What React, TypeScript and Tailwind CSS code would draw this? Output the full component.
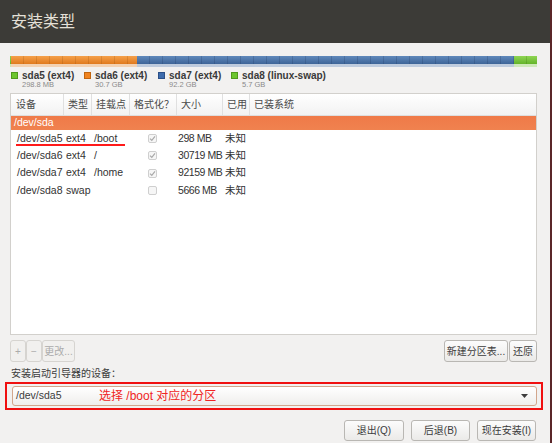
import React from 'react'

const font = { fontFamily: '"Liberation Sans", "Noto Sans CJK SC", sans-serif' }

const segments = [
  { w: 'w-[1px]', cls: 'bg-[image:linear-gradient(to_bottom,#8fd553,#64b42a)]', ref: 'bg-[#b7e497]' },
  { w: 'w-[126px]', cls: 'bg-[image:repeating-linear-gradient(90deg,transparent_0_12px,rgba(120,60,0,0.18)_12px_13px),linear-gradient(to_bottom,#f5a04a,#e07a1e)]', ref: 'bg-[#f4c69a]' },
  { w: 'w-[377px]', cls: 'bg-[image:repeating-linear-gradient(90deg,transparent_0_12px,rgba(20,40,80,0.2)_12px_13px),linear-gradient(to_bottom,#6089bb,#3e6598)]', ref: 'bg-[#a9bcd6]' },
  { w: 'flex-1', cls: 'bg-[image:repeating-linear-gradient(90deg,transparent_0_12px,rgba(40,90,0,0.2)_12px_13px),linear-gradient(to_bottom,#8fd553,#64b42a)]', ref: 'bg-[#bfe6a2]' },
]

const legend = [
  { name: 'sda5 (ext4)', size: '298.8 MB', color: 'bg-[#6cc62e] border-[#4f9a1c]', w: 'w-[73px]' },
  { name: 'sda6 (ext4)', size: '30.7 GB', color: 'bg-[#f0831f] border-[#c0650f]', w: 'w-[74px]' },
  { name: 'sda7 (ext4)', size: '92.2 GB', color: 'bg-[#3d6cad] border-[#2b5088]', w: 'w-[73px]' },
  { name: 'sda8 (linux-swap)', size: '5.7 GB', color: 'bg-[#6cc62e] border-[#4f9a1c]', w: 'w-auto' },
]

const rows = [
  { dev: '/dev/sda5', type: 'ext4', mount: '/boot', format: true, size: '298 MB', used: '未知' },
  { dev: '/dev/sda6', type: 'ext4', mount: '/', format: true, size: '30719 MB', used: '未知' },
  { dev: '/dev/sda7', type: 'ext4', mount: '/home', format: true, size: '92159 MB', used: '未知' },
  { dev: '/dev/sda8', type: 'swap', mount: '', format: false, size: '5666 MB', used: '未知' },
]

const cols = 'grid grid-cols-[53px_28px_38px_47px_46px_27px_1fr]'

function CheckBox({ checked }: { checked: boolean }) {
  return (
    <div className="w-[9px] h-[9px] rounded-[2px] border border-[#cfcfcf] bg-[#f6f6f6] flex items-center justify-center">
      {checked && (
        <svg width="7" height="7" viewBox="0 0 7 7">
          <path d="M1 3.6 L2.8 5.4 L6 1.4" fill="none" stroke="#a9a9a9" strokeWidth="1.2" />
        </svg>
      )}
    </div>
  )
}

function Button({ children, w, disabled }: { children: React.ReactNode; w: string; disabled?: boolean }) {
  return (
    <div
      className={`${w} h-full flex items-center justify-center rounded-[3px] border text-[10px] ${
        disabled
          ? 'border-[#d6d4d0] bg-[#f1f0ee] text-[#ababab]'
          : 'border-[#b9b7b3] bg-[image:linear-gradient(to_bottom,#fcfcfc,#ebeae8)] text-[#3c3c3c]'
      }`}
    >
      {children}
    </div>
  )
}

export default function App() {
  return (
    <div style={font} className="w-[552px] h-[443px] bg-[#f2f1f0] border-r-2 border-[#5a2629] flex flex-col overflow-hidden">
      {/* 标题栏 */}
      <div className="h-[43px] shrink-0 bg-[#3c3b37] flex items-center pl-[11px] text-[16px] text-[#e4e0d8]">
        安装类型
      </div>

      <div className="flex flex-col pl-[10px] pr-[13px]">
        {/* 分区条 */}
        <div className="mt-[13px] h-[8px] flex">
          {segments.map((s, i) => (
            <div key={i} className={`${s.w} ${s.cls} h-full`} />
          ))}
        </div>
        <div className="h-[3px] flex opacity-70">
          {segments.map((s, i) => (
            <div key={i} className={`${s.w} ${s.ref} h-full`} />
          ))}
        </div>

        {/* 图例 */}
        <div className="mt-[4px] flex pl-[1px]">
          {legend.map((l) => (
            <div key={l.name} className={`${l.w} flex`}>
              <div className={`w-[7px] h-[7px] mt-[1px] border ${l.color}`} />
              <div className="ml-[4px] flex flex-col">
                <span className="text-[10px] leading-[9px] font-bold text-[#3a3a3a]">{l.name}</span>
                <span className="text-[7.5px] leading-[8px] mt-[1px] text-[#8a8a8a]">{l.size}</span>
              </div>
            </div>
          ))}
        </div>

        {/* 分区表 */}
        <div className="mt-[4px] h-[242px] bg-white border border-[#d2d0cc] flex flex-col">
          <div className={`${cols} h-[22px] bg-[image:linear-gradient(to_bottom,#ffffff,#f2f2f2)] border-b border-[#dedede] text-[10px] text-[#4a4a4a]`}>
            {['设备', '类型', '挂载点', '格式化？', '大小', '已用', '已装系统'].map((h, i) => (
              <div key={h} className={`flex items-center pl-[4px] ${i < 6 ? 'border-r border-[#e0e0e0]' : ''} ${i === 0 ? 'pl-[5px]' : ''}`}>
                {h}
              </div>
            ))}
          </div>
          <div className="h-[14px] flex items-center pl-[3px] bg-[image:linear-gradient(to_bottom,#ef7a48,#f0824f)] text-white text-[10.5px]">
            /dev/sda
          </div>
          {rows.map((r, i) => (
            <div key={r.dev} className={`${cols} h-[17.3px] text-[10.5px] text-[#333] relative`}>
              <div className="flex items-center pl-[6px]">{r.dev}</div>
              <div className="flex items-center pl-[2px]">{r.type}</div>
              <div className="flex items-center pl-[2px]">{r.mount}</div>
              <div className="flex items-center pl-[18px]">
                <CheckBox checked={r.format} />
              </div>
              <div className="flex items-center pl-[1px] whitespace-nowrap tracking-[-0.45px]">{r.size}</div>
              <div className="flex items-center pl-[2px]">{r.used}</div>
              <div />
              {i === 0 && <div className="absolute left-[5px] top-[14px] w-[109px] h-[2px] bg-[#ff1a1a]" />}
            </div>
          ))}
        </div>

        {/* 分区操作 */}
        <div className="mt-[5px] h-[22px] flex">
          <Button w="w-[16px]" disabled>+</Button>
          <Button w="w-[16px]" disabled>−</Button>
          <Button w="w-[33px]" disabled>更改...</Button>
          <div className="flex-1" />
          <Button w="w-[64px]">新建分区表...</Button>
          <div className="w-[1px]" />
          <Button w="w-[28px]">还原</Button>
        </div>

        <div className="mt-[5px] h-[13px] flex items-center pl-[1px] text-[10px] text-[#3c3c3c]">
          安装启动引导器的设备：
        </div>

        {/* 引导器设备 */}
        <div className="mt-[2px] ml-[-5px] mr-[-6px] h-[28px] border-2 border-[#f01010] pl-[5px] pr-[4px] pt-[2px] pb-[2px]">
          <div className="h-[20px] rounded-[3px] border border-[#d2a68c] bg-[image:linear-gradient(to_bottom,#ffffff,#efeeec)] flex items-center pl-[3px] pr-[8px] text-[10.5px] text-[#3c3c3c]">
            <span className="w-[83px]">/dev/sda5</span>
            <span className="text-[12px] text-[#f02424]">选择 /boot 对应的分区</span>
            <div className="flex-1" />
            <svg width="7" height="4" viewBox="0 0 7 4">
              <path d="M0 0 H7 L3.5 4 Z" fill="#3c3c3c" />
            </svg>
          </div>
        </div>

        {/* 底部按钮 */}
        <div className="mt-[10px] h-[21px] flex justify-end gap-[7px] pr-[1px]">
          <Button w="w-[60px]">退出(Q)</Button>
          <Button w="w-[59px]">后退(B)</Button>
          <Button w="w-[59px]">现在安装(I)</Button>
        </div>
      </div>
    </div>
  )
}
